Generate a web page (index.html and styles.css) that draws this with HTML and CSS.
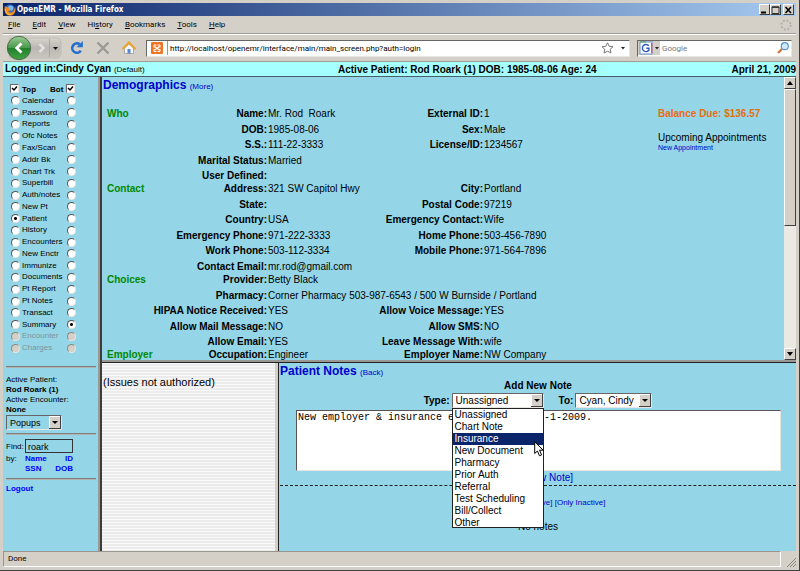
FILE: index.html
```html
<!DOCTYPE html>
<html lang="en">
<head>
<meta charset="utf-8">
<title>OpenEMR</title>
<link rel="stylesheet" href="styles.css">
</head>
<body>
<div class="window">
  <header class="titlebar">
    <svg class="app-icon" viewBox="0 0 12 12" width="12" height="12"><circle cx="6" cy="5.6" r="5" fill="#2f6fc4"/><circle cx="6.6" cy="4" r="2.6" fill="#7db8ec"/><path d="M1 2C-.4 7 1.500 11.500 6 11.600C10.500 11.500 12.500 7 11 2.500C10.800 5.500 9.500 8.600 6.500 8.600C4.500 8.600 4 7.300 5 6.800L6.800 6.200L5 5L4.600 3.500L3 3.300Z" fill="#f08a1c"/><path d="M1.200 5C1.500 9 4 10.800 7 10.600" stroke="#ffc64a" fill="none"/></svg>
    <h1 class="window-title">OpenEMR - Mozilla Firefox</h1>
    <div class="window-buttons">
      <button class="win-btn" type="button" aria-label="Minimize"><svg viewBox="0 0 9 8" width="9" height="8"><path d="M1 6.500H6" stroke="#000" stroke-width="2"/></svg></button>
      <button class="win-btn" type="button" aria-label="Maximize"><svg viewBox="0 0 9 8" width="9" height="8"><path d="M1 1H8V7.500H1Z" stroke="#333" fill="none"/><path d="M1 1.200H8" stroke="#333" stroke-width="1.500"/></svg></button>
      <button class="win-btn win-close" type="button" aria-label="Close"><svg viewBox="0 0 9 8" width="9" height="8"><path d="M1.500 1L7 7M7 1L1.500 7" stroke="#000" stroke-width="1.600"/></svg></button>
    </div>
  </header>
  <nav class="menubar">
    <button type="button" class="menu"><u>F</u>ile</button>
    <button type="button" class="menu"><u>E</u>dit</button>
    <button type="button" class="menu"><u>V</u>iew</button>
    <button type="button" class="menu">Hi<u>s</u>tory</button>
    <button type="button" class="menu"><u>B</u>ookmarks</button>
    <button type="button" class="menu"><u>T</u>ools</button>
    <button type="button" class="menu"><u>H</u>elp</button>
    <svg class="throbber" viewBox="0 0 12 12" width="12" height="12"><circle cx="6" cy="6" r="4.600" fill="none" stroke="#b4b1ab" stroke-width="2" stroke-dasharray="1.900 1.710"/></svg>
  </nav>
  <div class="toolbar">
    <svg class="nav-icons" viewBox="0 0 58 26" width="58" height="26">
      <defs><linearGradient id="green" x1="0" y1="0" x2="0" y2="1"><stop offset="0" stop-color="#9ccb98"/><stop offset=".48" stop-color="#4b9a4d"/><stop offset=".52" stop-color="#23802b"/><stop offset="1" stop-color="#43a544"/></linearGradient>
      <linearGradient id="pill" x1="0" y1="0" x2="0" y2="1"><stop offset="0" stop-color="#d6d3cd"/><stop offset=".5" stop-color="#bbb8b3"/><stop offset="1" stop-color="#c9c6c0"/></linearGradient></defs>
      <path d="M5 3H51Q56 3 56 8V18Q56 23 51 23H5Q1 13 5 3Z" fill="url(#pill)" stroke="#c1beb8"/>
      <path d="M44.500 4V22" stroke="#aaa7a1"/>
      <circle cx="14" cy="13" r="11.700" fill="url(#green)" stroke="#4c6b4b"/>
      <path d="M16.500 8.500L11.800 13L16.500 17.500" fill="none" stroke="#fff" stroke-width="2.800"/>
      <path d="M34.500 9L38.500 13L34.500 17" fill="none" stroke="#e6e4e0" stroke-width="2.400"/>
      <path d="M48 12H53L50.500 15Z" fill="#111"/>
    </svg>
    <button class="tool" type="button" aria-label="Reload"><svg viewBox="0 0 14 14" width="14" height="14"><path d="M10.800 9.800A4.700 4.700 0 1 1 9.600 3.200" fill="none" stroke="#1f6fd0" stroke-width="2.600"/><path d="M12.800 0V6.300H6.500Z" fill="#1f6fd0"/></svg></button>
    <button class="tool" type="button" aria-label="Stop"><svg viewBox="0 0 14 14" width="14" height="14"><path d="M1.500 1.500L12.500 12.500M12.500 1.500L1.500 12.500" stroke="#9b9995" stroke-width="2.400"/></svg></button>
    <button class="tool" type="button" aria-label="Home"><svg viewBox="0 0 14 14" width="14" height="14"><path d="M2.500 7V12.500H11.500V7L7 3Z" fill="#f4f6fb" stroke="#a9a9ae"/><path d="M.5 8L7 1.500L13.500 8" fill="none" stroke="#eda42a" stroke-width="2"/><path d="M5.500 8H8.500V12.500H5.500Z" fill="#5d86c8"/></svg></button>
    <div class="address">
      <svg class="site-icon" viewBox="0 0 12 12" width="12" height="12"><rect width="12" height="12" rx="1" fill="#f07522"/><path d="M3.500 4.500L8.500 8M8.500 4.500L3.500 8" stroke="#fff" stroke-width="1.400"/><path d="M3 5.500V3H5.500M6.500 3H9V5.500M9 7V9.500H6.500M5.500 9.500H3V7" fill="none" stroke="#fff"/></svg>
      <input class="url" type="text" aria-label="Address" value="http://localhost/openemr/interface/main/main_screen.php?auth=login">
      <svg viewBox="0 0 30 12" width="30" height="12"><path d="M8.500 .8L10.200 4.300L14 4.700L11.200 7.300L12 11L8.500 9.200L5 11L5.800 7.300L3 4.700L6.800 4.300Z" fill="#fff" stroke="#777"/><path d="M22 5H26L24 7.500Z" fill="#222"/></svg>
    </div>
    <div class="searchbox">
      <svg viewBox="0 0 22 14" width="22" height="14"><rect x="2" y="1" width="12" height="12" fill="#fff" stroke="#6d8fd0"/><path d="M13.800 2V12" stroke="#d04040"/><path d="M2 1H8" stroke="#51a351"/><path d="M10.800 4.800A3.600 3.600 0 1 0 11 9V7.300H8.300" fill="none" stroke="#2e57c0" stroke-width="1.400"/><path d="M17 6H21L19 8.500Z" fill="#222"/></svg>
      <input class="search" type="text" aria-label="Search" placeholder="Google">
      <svg viewBox="0 0 12 12" width="12" height="12"><path d="M1 11L5 7" stroke="#d07b3c" stroke-width="2.400"/><circle cx="7.800" cy="4.200" r="3.500" fill="#cfeafb" stroke="#5b94d0" stroke-width="1.200"/></svg>
    </div>
  </div>

  <div class="infobar">
    <div><strong>Logged in:Cindy Cyan</strong> <span class="role">(Default)</span></div>
    <strong>Active Patient: Rod Roark (1) DOB: 1985-08-06 Age: 24</strong>
    <strong class="date">April 21, 2009</strong>
  </div>

  <div class="frames">
    <aside class="sidebar">
      <div class="nav-head">
        <input type="checkbox" class="check" id="top" checked><label for="top">Top</label>
        <label for="bot" class="bot">Bot</label><input type="checkbox" class="check" id="bot" checked>
      </div>
      <div class="nav-list">
        <div class="nav-row"><input type="radio" name="t" id="n1"><label for="n1">Calendar</label><input type="radio" name="b" aria-label="Calendar"></div>
        <div class="nav-row"><input type="radio" name="t" id="n2"><label for="n2">Password</label><input type="radio" name="b" aria-label="Password"></div>
        <div class="nav-row"><input type="radio" name="t" id="n3"><label for="n3">Reports</label><input type="radio" name="b" aria-label="Reports"></div>
        <div class="nav-row"><input type="radio" name="t" id="n4"><label for="n4">Ofc Notes</label><input type="radio" name="b" aria-label="Ofc Notes"></div>
        <div class="nav-row"><input type="radio" name="t" id="n5"><label for="n5">Fax/Scan</label><input type="radio" name="b" aria-label="Fax/Scan"></div>
        <div class="nav-row"><input type="radio" name="t" id="n6"><label for="n6">Addr Bk</label><input type="radio" name="b" aria-label="Addr Bk"></div>
        <div class="nav-row"><input type="radio" name="t" id="n7"><label for="n7">Chart Trk</label><input type="radio" name="b" aria-label="Chart Trk"></div>
        <div class="nav-row"><input type="radio" name="t" id="n8"><label for="n8">Superbill</label><input type="radio" name="b" aria-label="Superbill"></div>
        <div class="nav-row"><input type="radio" name="t" id="n9"><label for="n9">Auth/notes</label><input type="radio" name="b" aria-label="Auth/notes"></div>
        <div class="nav-row"><input type="radio" name="t" id="n10"><label for="n10">New Pt</label><input type="radio" name="b" aria-label="New Pt"></div>
        <div class="nav-row"><input type="radio" name="t" id="n11" checked><label for="n11">Patient</label><input type="radio" name="b" aria-label="Patient"></div>
        <div class="nav-row"><input type="radio" name="t" id="n12"><label for="n12">History</label><input type="radio" name="b" aria-label="History"></div>
        <div class="nav-row"><input type="radio" name="t" id="n13"><label for="n13">Encounters</label><input type="radio" name="b" aria-label="Encounters"></div>
        <div class="nav-row"><input type="radio" name="t" id="n14"><label for="n14">New Enctr</label><input type="radio" name="b" aria-label="New Enctr"></div>
        <div class="nav-row"><input type="radio" name="t" id="n15"><label for="n15">Immunize</label><input type="radio" name="b" aria-label="Immunize"></div>
        <div class="nav-row"><input type="radio" name="t" id="n16"><label for="n16">Documents</label><input type="radio" name="b" aria-label="Documents"></div>
        <div class="nav-row"><input type="radio" name="t" id="n17"><label for="n17">Pt Report</label><input type="radio" name="b" aria-label="Pt Report"></div>
        <div class="nav-row"><input type="radio" name="t" id="n18"><label for="n18">Pt Notes</label><input type="radio" name="b" aria-label="Pt Notes"></div>
        <div class="nav-row"><input type="radio" name="t" id="n19"><label for="n19">Transact</label><input type="radio" name="b" aria-label="Transact"></div>
        <div class="nav-row"><input type="radio" name="t" id="n20"><label for="n20">Summary</label><input type="radio" name="b" aria-label="Summary" checked></div>
        <div class="nav-row off"><input type="radio" name="t" id="n21" disabled><label for="n21">Encounter</label><input type="radio" name="b" aria-label="Encounter" disabled></div>
        <div class="nav-row off"><input type="radio" name="t" id="n22" disabled><label for="n22">Charges</label><input type="radio" name="b" aria-label="Charges" disabled></div>
      </div>
      <hr class="rule">
      <div class="active">
        <div>Active Patient:</div>
        <div><strong>Rod Roark (1)</strong></div>
        <div>Active Encounter:</div>
        <div><strong>None</strong></div>
        <div class="combo popups"><select aria-label="Popups"><option>Popups</option></select></div>
      </div>
      <hr class="rule">
      <div class="find">
        <label for="find">Find:</label><input class="find-input" id="find" type="text" value="roark">
        <span>by:</span>
        <div class="find-links"><a href="#">Name</a><a href="#">ID</a><a href="#">SSN</a><a href="#">DOB</a></div>
      </div>
      <hr class="rule">
      <a class="logout" href="#">Logout</a>
    </aside>

    <main class="main">
      <section class="demographics">
        <div class="demo-body">
          <h2>Demographics <a href="#">(More)</a></h2>
          <div class="demo-columns">
            <div class="groups">
              <section class="group">
                <h3>Who</h3>
                <dl>
                  <dt>Name:</dt><dd>Mr. Rod &nbsp;Roark</dd><dt class="second">External ID:</dt><dd class="second">1</dd>
                  <dt>DOB:</dt><dd>1985-08-06</dd><dt class="second">Sex:</dt><dd class="second">Male</dd>
                  <dt>S.S.:</dt><dd>111-22-3333</dd><dt class="second">License/ID:</dt><dd class="second">1234567</dd>
                  <dt>Marital Status:</dt><dd>Married</dd>
                  <dt>User Defined:</dt><dd></dd>
                </dl>
              </section>
              <section class="group six">
                <h3>Contact</h3>
                <dl>
                  <dt>Address:</dt><dd>321 SW Capitol Hwy</dd><dt class="second">City:</dt><dd class="second">Portland</dd>
                  <dt>State:</dt><dd></dd><dt class="second">Postal Code:</dt><dd class="second">97219</dd>
                  <dt>Country:</dt><dd>USA</dd><dt class="second">Emergency Contact:</dt><dd class="second">Wife</dd>
                  <dt>Emergency Phone:</dt><dd>971-222-3333</dd><dt class="second">Home Phone:</dt><dd class="second">503-456-7890</dd>
                  <dt>Work Phone:</dt><dd>503-112-3334</dd><dt class="second">Mobile Phone:</dt><dd class="second">971-564-7896</dd>
                  <dt>Contact Email:</dt><dd>mr.rod@gmail.com</dd>
                </dl>
              </section>
              <section class="group">
                <h3>Choices</h3>
                <dl>
                  <dt>Provider:</dt><dd>Betty Black</dd>
                  <dt>Pharmacy:</dt><dd class="wide">Corner Pharmacy 503-987-6543 / 500 W Burnside / Portland</dd>
                  <dt>HIPAA Notice Received:</dt><dd>YES</dd><dt class="second">Allow Voice Message:</dt><dd class="second">YES</dd>
                  <dt>Allow Mail Message:</dt><dd>NO</dd><dt class="second">Allow SMS:</dt><dd class="second">NO</dd>
                  <dt>Allow Email:</dt><dd>YES</dd><dt class="second">Leave Message With:</dt><dd class="second">wife</dd>
                </dl>
              </section>
              <section class="group one">
                <h3>Employer</h3>
                <dl>
                  <dt>Occupation:</dt><dd>Engineer</dd><dt class="second">Employer Name:</dt><dd class="second">NW Company</dd>
                </dl>
              </section>
            </div>
            <div class="summary">
              <strong class="balance">Balance Due: $136.57</strong>
              <div class="upcoming">Upcoming Appointments</div>
              <a class="new-appt" href="#">New Appointment</a>
            </div>
          </div>
        </div>
        <div class="scrollbar">
          <button type="button" class="sb-btn" aria-label="Scroll up"><svg viewBox="0 0 6 4" width="6" height="4"><path d="M0 4H6L3 0Z"/></svg></button>
          <div class="sb-thumb"></div>
          <div class="sb-track"></div>
          <button type="button" class="sb-btn" aria-label="Scroll down"><svg viewBox="0 0 6 4" width="6" height="4"><path d="M0 0H6L3 4Z"/></svg></button>
        </div>
      </section>

      <div class="lower">
        <section class="issues">(Issues not authorized)</section>
        <section class="notes">
          <h2>Patient Notes <a href="#">(Back)</a></h2>
          <form class="note-form">
            <strong class="form-title">Add New Note</strong>
            <div class="form-row">
              <label for="type">Type:</label>
              <div class="combo type">
                <select id="type"><option>Unassigned</option></select>
                <ul class="options">
                  <li>Unassigned</li><li>Chart Note</li><li class="hot">Insurance</li><li>New Document</li><li>Pharmacy</li><li>Prior Auth</li><li>Referral</li><li>Test Scheduling</li><li>Bill/Collect</li><li>Other</li>
                </ul>
                <svg class="pointer" viewBox="0 0 10 16" width="10" height="16"><path d="M.7 .8V12.500L3.400 10L5.500 14.800L7.600 13.900L5.500 9.200H9.200Z" fill="#fff" stroke="#000"/></svg>
              </div>
              <label for="to" class="to-label">To:</label>
              <div class="combo to"><select id="to"><option>Cyan, Cindy</option></select></div>
            </div>
            <textarea class="note-text" aria-label="Note">New employer &amp; insurance effective from 5-1-2009.</textarea>
            <a class="add-link" href="#">[Add New Note]</a>
          </form>
          <div class="filters"><a href="#">[Show All]</a> <a href="#">[Only Active]</a> <a href="#">[Only Inactive]</a></div>
          <div class="empty">No notes</div>
        </section>
      </div>
    </main>
  </div>

  <footer class="statusbar">
    <div class="status">Done</div>
    <svg viewBox="0 0 10 10" width="10" height="10"><path d="M1 10L10 1M4 10L10 4M7 10L10 7" stroke="#8a8781"/></svg>
  </footer>
</div>
</body>
</html>
```

FILE: styles.css
```css
* { box-sizing: border-box; }

body {
  margin: 0;
  background: #d4d0c8;
  color: #000;
  font: 10px/13px "Liberation Sans", Arial, sans-serif;
}

h1, h2, h3, dl, dd, ul { margin: 0; padding: 0; }
a { color: #0000cc; text-decoration: none; }
input, select, textarea, button { font: inherit; margin: 0; color: inherit; }
svg { display: block; flex: none; }

.window {
  display: flex;
  flex-direction: column;
  height: 100vh;
  min-height: 570px;
  padding: 3px;
  border-right: 1px solid #404040;
  border-bottom: 1px solid #404040;
  overflow: hidden;
}

/* Browser chrome */
.titlebar {
  flex: none;
  display: flex;
  align-items: center;
  gap: 1px;
  height: 13px;
  padding: 0 2px 0 1px;
  background: linear-gradient(90deg, #0a246a, #a6caf0);
  color: #fff;
}
.window-title {
  flex: 1;
  font: bold 8px/13px "DejaVu Sans Condensed", "DejaVu Sans", sans-serif;
}
.window-buttons { display: flex; }
.win-btn {
  display: grid;
  place-items: center;
  width: 11px;
  height: 11px;
  padding: 0;
  background: #d4d0c8;
  border: 1px solid;
  border-color: #fff #404040 #404040 #fff;
}
.win-close { margin-left: 2px; }

.menubar {
  flex: none;
  display: flex;
  align-items: center;
  gap: 12px;
  height: 18px;
  padding: 0 4px 0 5px;
  border-bottom: 1px solid #a09d96;
  font: 8px/12px Roboto, sans-serif;
}
.menu { padding: 0; border: 0; background: none; }
.throbber { margin-left: auto; }

.toolbar {
  flex: none;
  display: flex;
  align-items: center;
  height: 28px;
  padding: 0 4px 0 2px;
  border-top: 1px solid #fff;
  border-bottom: 1px solid #a09d96;
  font: 8px/12px Roboto, sans-serif;
}
.tool { padding: 0; border: 0; background: none; margin-left: 12px; }
.nav-icons + .tool { margin-left: 7px; }
.address, .searchbox {
  display: flex;
  align-items: center;
  height: 17px;
  background: #fff;
  border: 1px solid;
  border-color: #666 #e8e6e0 #e8e6e0 #666;
}
.address { flex: 1; margin-left: 10px; padding-left: 4px; }
.site-icon { margin-right: 4px; }
.url, .search {
  flex: 1;
  min-width: 0;
  height: 14px;
  padding: 0 0 0 2px;
  border: 0;
  background: none;
}
.url { border-left: 1px solid #999; }
.searchbox { width: 155px; margin-left: 7px; padding-right: 2px; }
.searchbox svg:first-child { background: #d4d0c8; }
.search::placeholder { color: #777; opacity: 1; }

/* Patient banner */
.infobar {
  flex: none;
  display: grid;
  grid-template-columns: 333px auto 1fr;
  align-items: center;
  height: 15px;
  padding: 0 0 0 2px;
  background: #a6ffff;
  border-bottom: 1px solid #486064;
}
.role { font-size: 8px; }
.date { text-align: right; }

.frames { flex: 1; display: flex; min-height: 0; background: #94d6e7; }

/* Navigation frame */
.sidebar {
  flex: none;
  width: 99px;
  padding: 4px 3px 0 3px;
  border-right: 2px solid #3c3c3c;
  box-shadow: inset -2px 0 #9a9892;
  font-size: 8px;
  line-height: 10px;
}
.nav-head {
  display: flex;
  align-items: center;
  height: 14px;
  padding-left: 4px;
  font-weight: bold;
}
.nav-head label { padding: 4px 3px 0; }
.nav-head .bot { padding-left: 11px; }
.check {
  appearance: none;
  width: 9px;
  height: 9px;
  background: #fff;
  border: 1px solid;
  border-color: #666 #e8e6e0 #e8e6e0 #666;
}
.check:checked {
  background: #fff url('data:image/svg+xml,<svg xmlns="http://www.w3.org/2000/svg" viewBox="0 0 7 7"><path d="M1 3L3 5L6 1.500" fill="none" stroke="black" stroke-width="1.500"/></svg>') center / 7px 7px;
}
.nav-list { display: grid; grid-auto-rows: 1fr; height: 259px; }
.nav-row {
  display: grid;
  grid-template-columns: 9px 43px 9px;
  gap: 2px;
  align-items: center;
  padding-left: 5px;
}
.nav-row.off { color: #7f9297; }
.nav-row input {
  appearance: none;
  width: 9px;
  height: 9px;
  border: 1px solid;
  border-color: #555 #e8e6e0 #e8e6e0 #555;
  border-radius: 50%;
  background: #fff;
}
.nav-row input:checked { background: radial-gradient(circle, #000 0 1px, #fff 2px); }
.nav-row input:disabled { background: #d4d0c8; border-color: #8a8984 #e8e6e0 #e8e6e0 #8a8984; }
.rule {
  height: 2px;
  margin: 0 1px 0 0;
  border: 0;
  border-top: 1px solid #7d7f80;
  border-bottom: 1px solid #b4b2ac;
}
.nav-list + .rule { margin-top: 12px; }
.active { padding: 7px 0 3px; }

.combo {
  position: relative;
  background: #fff;
  border: 1px solid;
  border-color: #666 #e8e6e0 #e8e6e0 #666;
}
.combo select {
  appearance: none;
  display: block;
  width: 100%;
  height: 13px;
  padding: 0 14px 0 3px;
  border: 0;
  border-radius: 0;
  background: url('data:image/svg+xml,<svg xmlns="http://www.w3.org/2000/svg" viewBox="0 0 12 13"><path d="M0 0H12V13H0Z" fill="%23404040"/><path d="M0 0H11V12H0Z" fill="white"/><path d="M1 1H11V12H1Z" fill="%23d4d0c8"/><path d="M3 5H9L6 8Z"/></svg>') right / 12px 13px no-repeat;
}
.popups { width: 56px; font-size: 9px; }
.popups select { background-color: #94d6e7; }

.find {
  display: grid;
  grid-template-columns: 19px 48px;
  align-items: start;
  row-gap: 1px;
  padding: 4px 0;
}
.find label { padding-top: 3px; }
.find-input {
  width: 48px;
  height: 14px;
  padding: 2px 2px 0;
  border: 1px solid #333;
  border-radius: 0;
  background: none;
  font-size: 9px;
}
.find-links {
  display: grid;
  grid-template-columns: auto auto;
  justify-content: space-between;
  font-weight: bold;
}
.find-links a:nth-child(even) { text-align: right; }
.find-links a, .logout { color: #0000ff; }
.logout { display: block; margin-top: 4px; font-weight: bold; }

/* Patient summary frame */
.main { flex: 1; display: flex; flex-direction: column; min-width: 0; }
.demographics {
  flex: 3;
  display: flex;
  min-height: 286px;
  border-bottom: 1px solid #222;
  box-shadow: inset 0 -2px #9a9892;
  padding-bottom: 2px;
}
.demo-body { flex: 1; padding-left: 1px; }
h2 { padding-top: 1px; font-size: 12px; line-height: 14px; color: #0000cc; }
h2 a { font-size: 8px; font-weight: normal; }
.demo-columns { display: flex; gap: 11px; padding: 13px 0 0 4px; }
.groups { width: 540px; }
.group { display: flex; height: 75px; }
.group.six { height: 91px; }
.group.one { height: 13px; }
.group h3 { width: 40px; font-size: 10px; line-height: 13px; color: #008800; }
.group dl {
  flex: 1;
  display: grid;
  grid-template-columns: 120px 94px 120px 1fr;
  grid-auto-rows: 13px;
  align-content: space-between;
  column-gap: 1px;
}
.group dt { grid-column: 1; font-weight: bold; text-align: right; }
.group dd { grid-column: 2; white-space: nowrap; }
.group dt.second { grid-column: 3; }
.group dd.second { grid-column: 4; }
.group dd.wide { grid-column: 2 / -1; }
.balance { display: block; color: #e86c10; }
.upcoming { padding-top: 11px; }
.new-appt { display: block; font-size: 7px; line-height: 8px; }

.scrollbar {
  display: flex;
  flex-direction: column;
  width: 12px;
  background: #ebe9e4;
}
.sb-btn, .sb-thumb {
  background: #d4d0c8;
  border: 1px solid;
  border-color: #fff #404040 #404040 #fff;
}
.sb-btn { display: grid; place-items: center; height: 12px; padding: 0; }
.sb-thumb { flex: 136; }
.sb-track { flex: 122; }

.lower { flex: 2; display: flex; min-height: 188px; }
.issues {
  width: 177px;
  padding: 13px 0 0 1px;
  border-right: 1px solid #222;
  box-shadow: inset -3px 0 #d4d0c8;
  background: repeating-linear-gradient(#fafafa 0 1px, #ebebeb 1px 3px);
  font-size: 11px;
}

/* Notes frame */
.notes { flex: 1; padding-left: 1px; min-width: 0; }
.note-form {
  display: flex;
  flex-direction: column;
  align-items: center;
  border-bottom: 1px dashed #222;
}
.form-title { line-height: 12px; }
.form-row { display: flex; align-items: center; gap: 2px; padding: 1px 0 2px; }
.form-row label { font-weight: bold; }
.form-row .to-label { margin-left: 13px; }
.type { width: 92px; }
.to { width: 77px; }
.options {
  position: absolute;
  top: 14px;
  left: -1px;
  right: -1px;
  z-index: 1;
  display: grid;
  grid-auto-rows: 1fr;
  height: 120px;
  list-style: none;
  background: #fff;
  border: 1px solid #222;
  line-height: 12px;
}
.options li { padding-left: 2px; }
.options .hot { background: #0a246a; color: #fff; }
.pointer { position: absolute; top: 47px; right: -1px; z-index: 2; }
.note-text {
  align-self: stretch;
  height: 61px;
  margin: 0 15px 0 16px;
  padding: 0 1px;
  border: 1px solid;
  border-color: #555 #e8e6e0 #e8e6e0 #555;
  background: #fff;
  resize: none;
  font-family: "Liberation Mono", monospace;
}
.add-link { line-height: 14px; }
.filters { padding-top: 11px; text-align: center; font-size: 8px; line-height: 12px; }
.empty { padding-top: 11px; text-align: center; }

.statusbar {
  flex: none;
  display: flex;
  align-items: end;
  gap: 5px;
  height: 16px;
}
.status {
  flex: 1;
  height: 16px;
  padding-left: 4px;
  border: 1px solid;
  border-color: #99968f #fff #fff #99968f;
  font: 8px/14px Roboto, sans-serif;
}
```
